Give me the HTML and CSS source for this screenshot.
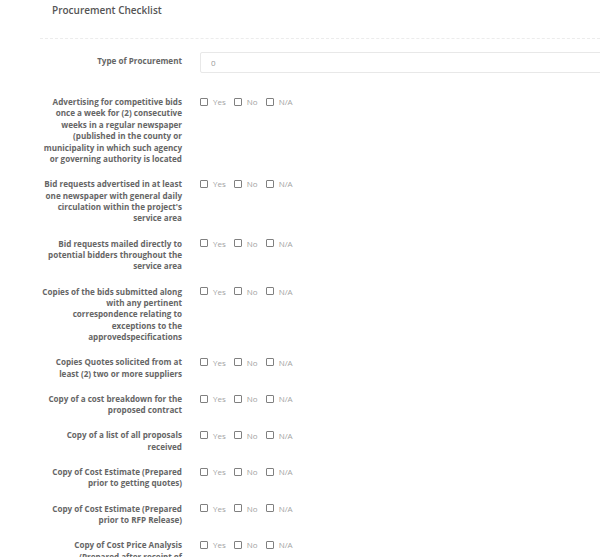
FILE: index.html
```html
<!DOCTYPE html>
<html>
<head>
<meta charset="utf-8">
<link rel="stylesheet" href="styles.css">
</head>
<body>
<div class="page">
  <h1 class="title">Procurement Checklist</h1>
  <div class="divider"></div>
  <form class="form">
    <div class="row row-input">
      <label class="label">Type of Procurement</label>
      <div class="control"><input class="text" type="text" value="0"></div>
    </div>
    <div class="row">
      <label class="label">Advertising for competitive bids once a week for (2) consecutive weeks in a regular newspaper (published in the county or municipality in which such agency or governing authority is located</label>
      <div class="control checks"><span class="opt"><span class="box"></span>Yes</span><span class="opt"><span class="box"></span>No</span><span class="opt"><span class="box"></span>N/A</span></div>
    </div>
    <div class="row">
      <label class="label">Bid requests advertised in at least one newspaper with general daily circulation within the project's service area</label>
      <div class="control checks"><span class="opt"><span class="box"></span>Yes</span><span class="opt"><span class="box"></span>No</span><span class="opt"><span class="box"></span>N/A</span></div>
    </div>
    <div class="row">
      <label class="label">Bid requests mailed directly to potential bidders throughout the service area</label>
      <div class="control checks"><span class="opt"><span class="box"></span>Yes</span><span class="opt"><span class="box"></span>No</span><span class="opt"><span class="box"></span>N/A</span></div>
    </div>
    <div class="row">
      <label class="label">Copies of the bids submitted along with any pertinent correspondence relating to exceptions to the approvedspecifications</label>
      <div class="control checks"><span class="opt"><span class="box"></span>Yes</span><span class="opt"><span class="box"></span>No</span><span class="opt"><span class="box"></span>N/A</span></div>
    </div>
    <div class="row">
      <label class="label">Copies Quotes solicited from at least (2) two or more suppliers</label>
      <div class="control checks"><span class="opt"><span class="box"></span>Yes</span><span class="opt"><span class="box"></span>No</span><span class="opt"><span class="box"></span>N/A</span></div>
    </div>
    <div class="row">
      <label class="label">Copy of a cost breakdown for the proposed contract</label>
      <div class="control checks"><span class="opt"><span class="box"></span>Yes</span><span class="opt"><span class="box"></span>No</span><span class="opt"><span class="box"></span>N/A</span></div>
    </div>
    <div class="row">
      <label class="label">Copy of a list of all proposals received</label>
      <div class="control checks"><span class="opt"><span class="box"></span>Yes</span><span class="opt"><span class="box"></span>No</span><span class="opt"><span class="box"></span>N/A</span></div>
    </div>
    <div class="row">
      <label class="label">Copy of Cost Estimate (Prepared prior to getting quotes)</label>
      <div class="control checks"><span class="opt"><span class="box"></span>Yes</span><span class="opt"><span class="box"></span>No</span><span class="opt"><span class="box"></span>N/A</span></div>
    </div>
    <div class="row">
      <label class="label">Copy of Cost Estimate (Prepared prior to RFP Release)</label>
      <div class="control checks"><span class="opt"><span class="box"></span>Yes</span><span class="opt"><span class="box"></span>No</span><span class="opt"><span class="box"></span>N/A</span></div>
    </div>
    <div class="row">
      <label class="label">Copy of Cost Price Analysis (Prepared after receipt of proposals)</label>
      <div class="control checks"><span class="opt"><span class="box"></span>Yes</span><span class="opt"><span class="box"></span>No</span><span class="opt"><span class="box"></span>N/A</span></div>
    </div>
  </form>
</div>
</body>
</html>
```
FILE: styles.css
```css
html, body {
  margin: 0;
  padding: 0;
  background: #fff;
  overflow: hidden;
}
body {
  font-family: "Open Sans", "DejaVu Sans", sans-serif;
  color: #666;
}
.page {
  width: 600px;
  height: 557px;
  overflow: hidden;
}
.title {
  margin: 0;
  padding: 2px 0 0 52px;
  font-size: 10px;
  line-height: 16px;
  font-weight: 600;
  color: #555;
}
.divider {
  margin: 20px 0 0 40px;
  border-top: 1px dashed #ececec;
}
.form {
  padding-top: 10px;
}
.row {
  display: grid;
  grid-template-columns: 141px 1fr;
  column-gap: 18px;
  margin-left: 41px;
  margin-bottom: 13.75px;
}
.row-input {
  align-items: center;
  margin-bottom: 23px;
}
.label {
  text-align: right;
  font-size: 8.1px;
  line-height: 11.4px;
  font-weight: 700;
  color: #666;
}
.text {
  box-sizing: border-box;
  width: 440px;
  height: 21px;
  margin: 0;
  padding: 0 10px;
  border: 1px solid #e8e8e8;
  border-radius: 2px;
  font-family: "Open Sans", sans-serif;
  font-size: 8px;
  color: #999;
  outline: none;
}
.checks {
  display: flex;
  align-items: center;
  height: 11.4px;
  font-size: 8px;
  color: #a3a3a3;
}
.opt {
  display: inline-flex;
  align-items: center;
  margin-right: 8px;
}
.box {
  box-sizing: border-box;
  width: 8px;
  height: 8px;
  border: 1px solid #808080;
  border-radius: 1px;
  margin-right: 5px;
}
```
